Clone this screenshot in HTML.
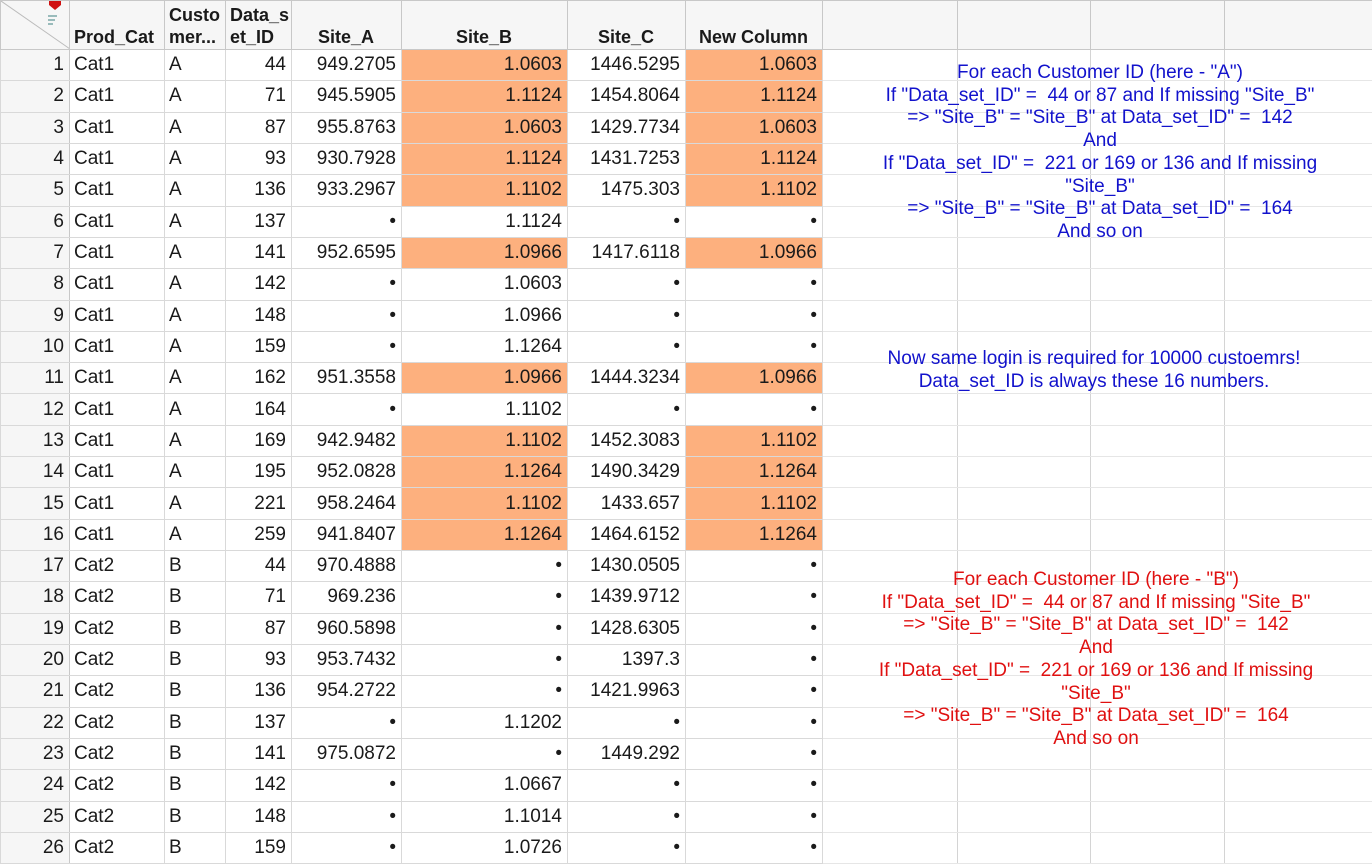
<!DOCTYPE html>
<html><head><meta charset="utf-8"><style>
body{margin:0;width:1372px;height:848px;overflow:hidden;background:#fff;font-family:"Liberation Sans",Arial,sans-serif;position:relative}
table{position:absolute;left:0;top:0;width:1372px;border-collapse:collapse;table-layout:fixed;font-size:19px;color:#1a1a1a}
td,th{border:1px solid #d9d9d9;padding:0 5px 0 4px;white-space:nowrap;overflow:hidden;height:30.32px;line-height:30px}
th{height:47px;background:#f6f6f6;border-color:#c8c8c8;font-weight:bold;font-size:18px;vertical-align:bottom;line-height:22px;padding-bottom:1px;text-align:center}
td.n{background:#f6f6f6;text-align:right;padding-right:5px;border-right-color:#c8c8c8}
td.r{text-align:right}
td.o{background:#fdb07e}
td.e{border-left-color:#d4d4d4;border-right-color:#d4d4d4;border-top-color:#e6e6e6;border-bottom-color:#e6e6e6}
.t{position:absolute;text-align:center;font-size:19px;line-height:22.7px;white-space:nowrap}
</style></head><body>
<table>
<colgroup><col style="width:69px"><col style="width:95px"><col style="width:61px"><col style="width:66px"><col style="width:110px"><col style="width:166px"><col style="width:118px"><col style="width:137px"><col style="width:135px"><col style="width:133px"><col style="width:134px"><col style="width:148px"></colgroup>
<tr><th style="background:#f6f6f6;position:relative"><svg width="69" height="48" style="position:absolute;left:0;top:0"><line x1="0" y1="0" x2="69" y2="48" stroke="#bbb"/><path d="M48 0 L60 0 L60 4 L54 9 L48 4Z" fill="#d01010"/><rect x="47" y="14" width="9" height="2" fill="#9bb"/><rect x="47" y="18" width="7" height="2" fill="#9bb"/><rect x="47" y="22" width="5" height="2" fill="#9bb"/></svg></th><th style="text-align:left">Prod_Cat</th><th style="text-align:left">Custo<br>mer...</th><th style="text-align:left">Data_s<br>et_ID</th><th>Site_A</th><th>Site_B</th><th>Site_C</th><th>New Column</th><th></th><th></th><th></th><th></th></tr>
<tr><td class="n">1</td><td>Cat1</td><td>A</td><td class="r">44</td><td class="r">949.2705</td><td class="r o">1.0603</td><td class="r">1446.5295</td><td class="r o">1.0603</td><td class="e"></td><td class="e"></td><td class="e"></td><td class="e"></td></tr>
<tr><td class="n">2</td><td>Cat1</td><td>A</td><td class="r">71</td><td class="r">945.5905</td><td class="r o">1.1124</td><td class="r">1454.8064</td><td class="r o">1.1124</td><td class="e"></td><td class="e"></td><td class="e"></td><td class="e"></td></tr>
<tr><td class="n">3</td><td>Cat1</td><td>A</td><td class="r">87</td><td class="r">955.8763</td><td class="r o">1.0603</td><td class="r">1429.7734</td><td class="r o">1.0603</td><td class="e"></td><td class="e"></td><td class="e"></td><td class="e"></td></tr>
<tr><td class="n">4</td><td>Cat1</td><td>A</td><td class="r">93</td><td class="r">930.7928</td><td class="r o">1.1124</td><td class="r">1431.7253</td><td class="r o">1.1124</td><td class="e"></td><td class="e"></td><td class="e"></td><td class="e"></td></tr>
<tr><td class="n">5</td><td>Cat1</td><td>A</td><td class="r">136</td><td class="r">933.2967</td><td class="r o">1.1102</td><td class="r">1475.303</td><td class="r o">1.1102</td><td class="e"></td><td class="e"></td><td class="e"></td><td class="e"></td></tr>
<tr><td class="n">6</td><td>Cat1</td><td>A</td><td class="r">137</td><td class="r">•</td><td class="r">1.1124</td><td class="r">•</td><td class="r">•</td><td class="e"></td><td class="e"></td><td class="e"></td><td class="e"></td></tr>
<tr><td class="n">7</td><td>Cat1</td><td>A</td><td class="r">141</td><td class="r">952.6595</td><td class="r o">1.0966</td><td class="r">1417.6118</td><td class="r o">1.0966</td><td class="e"></td><td class="e"></td><td class="e"></td><td class="e"></td></tr>
<tr><td class="n">8</td><td>Cat1</td><td>A</td><td class="r">142</td><td class="r">•</td><td class="r">1.0603</td><td class="r">•</td><td class="r">•</td><td class="e"></td><td class="e"></td><td class="e"></td><td class="e"></td></tr>
<tr><td class="n">9</td><td>Cat1</td><td>A</td><td class="r">148</td><td class="r">•</td><td class="r">1.0966</td><td class="r">•</td><td class="r">•</td><td class="e"></td><td class="e"></td><td class="e"></td><td class="e"></td></tr>
<tr><td class="n">10</td><td>Cat1</td><td>A</td><td class="r">159</td><td class="r">•</td><td class="r">1.1264</td><td class="r">•</td><td class="r">•</td><td class="e"></td><td class="e"></td><td class="e"></td><td class="e"></td></tr>
<tr><td class="n">11</td><td>Cat1</td><td>A</td><td class="r">162</td><td class="r">951.3558</td><td class="r o">1.0966</td><td class="r">1444.3234</td><td class="r o">1.0966</td><td class="e"></td><td class="e"></td><td class="e"></td><td class="e"></td></tr>
<tr><td class="n">12</td><td>Cat1</td><td>A</td><td class="r">164</td><td class="r">•</td><td class="r">1.1102</td><td class="r">•</td><td class="r">•</td><td class="e"></td><td class="e"></td><td class="e"></td><td class="e"></td></tr>
<tr><td class="n">13</td><td>Cat1</td><td>A</td><td class="r">169</td><td class="r">942.9482</td><td class="r o">1.1102</td><td class="r">1452.3083</td><td class="r o">1.1102</td><td class="e"></td><td class="e"></td><td class="e"></td><td class="e"></td></tr>
<tr><td class="n">14</td><td>Cat1</td><td>A</td><td class="r">195</td><td class="r">952.0828</td><td class="r o">1.1264</td><td class="r">1490.3429</td><td class="r o">1.1264</td><td class="e"></td><td class="e"></td><td class="e"></td><td class="e"></td></tr>
<tr><td class="n">15</td><td>Cat1</td><td>A</td><td class="r">221</td><td class="r">958.2464</td><td class="r o">1.1102</td><td class="r">1433.657</td><td class="r o">1.1102</td><td class="e"></td><td class="e"></td><td class="e"></td><td class="e"></td></tr>
<tr><td class="n">16</td><td>Cat1</td><td>A</td><td class="r">259</td><td class="r">941.8407</td><td class="r o">1.1264</td><td class="r">1464.6152</td><td class="r o">1.1264</td><td class="e"></td><td class="e"></td><td class="e"></td><td class="e"></td></tr>
<tr><td class="n">17</td><td>Cat2</td><td>B</td><td class="r">44</td><td class="r">970.4888</td><td class="r">•</td><td class="r">1430.0505</td><td class="r">•</td><td class="e"></td><td class="e"></td><td class="e"></td><td class="e"></td></tr>
<tr><td class="n">18</td><td>Cat2</td><td>B</td><td class="r">71</td><td class="r">969.236</td><td class="r">•</td><td class="r">1439.9712</td><td class="r">•</td><td class="e"></td><td class="e"></td><td class="e"></td><td class="e"></td></tr>
<tr><td class="n">19</td><td>Cat2</td><td>B</td><td class="r">87</td><td class="r">960.5898</td><td class="r">•</td><td class="r">1428.6305</td><td class="r">•</td><td class="e"></td><td class="e"></td><td class="e"></td><td class="e"></td></tr>
<tr><td class="n">20</td><td>Cat2</td><td>B</td><td class="r">93</td><td class="r">953.7432</td><td class="r">•</td><td class="r">1397.3</td><td class="r">•</td><td class="e"></td><td class="e"></td><td class="e"></td><td class="e"></td></tr>
<tr><td class="n">21</td><td>Cat2</td><td>B</td><td class="r">136</td><td class="r">954.2722</td><td class="r">•</td><td class="r">1421.9963</td><td class="r">•</td><td class="e"></td><td class="e"></td><td class="e"></td><td class="e"></td></tr>
<tr><td class="n">22</td><td>Cat2</td><td>B</td><td class="r">137</td><td class="r">•</td><td class="r">1.1202</td><td class="r">•</td><td class="r">•</td><td class="e"></td><td class="e"></td><td class="e"></td><td class="e"></td></tr>
<tr><td class="n">23</td><td>Cat2</td><td>B</td><td class="r">141</td><td class="r">975.0872</td><td class="r">•</td><td class="r">1449.292</td><td class="r">•</td><td class="e"></td><td class="e"></td><td class="e"></td><td class="e"></td></tr>
<tr><td class="n">24</td><td>Cat2</td><td>B</td><td class="r">142</td><td class="r">•</td><td class="r">1.0667</td><td class="r">•</td><td class="r">•</td><td class="e"></td><td class="e"></td><td class="e"></td><td class="e"></td></tr>
<tr><td class="n">25</td><td>Cat2</td><td>B</td><td class="r">148</td><td class="r">•</td><td class="r">1.1014</td><td class="r">•</td><td class="r">•</td><td class="e"></td><td class="e"></td><td class="e"></td><td class="e"></td></tr>
<tr><td class="n">26</td><td>Cat2</td><td>B</td><td class="r">159</td><td class="r">•</td><td class="r">1.0726</td><td class="r">•</td><td class="r">•</td><td class="e"></td><td class="e"></td><td class="e"></td><td class="e"></td></tr>
</table>
<div class="t" style="left:830px;width:540px;top:62px;color:#1212cc">For each Customer ID (here - "A")<br>If "Data_set_ID" =&nbsp; 44 or 87 and If missing "Site_B"<br>=&gt; "Site_B" = "Site_B" at Data_set_ID" =&nbsp; 142<br>And<br>If "Data_set_ID" =&nbsp; 221 or 169 or 136 and If missing<br>"Site_B"<br>=&gt; "Site_B" = "Site_B" at Data_set_ID" =&nbsp; 164<br>And so on</div>
<div class="t" style="left:824px;width:540px;top:348px;color:#1212cc">Now same login is required for 10000 custoemrs!<br>Data_set_ID is always these 16 numbers.</div>
<div class="t" style="left:826px;width:540px;top:569px;color:#e01010">For each Customer ID (here - "B")<br>If "Data_set_ID" =&nbsp; 44 or 87 and If missing "Site_B"<br>=&gt; "Site_B" = "Site_B" at Data_set_ID" =&nbsp; 142<br>And<br>If "Data_set_ID" =&nbsp; 221 or 169 or 136 and If missing<br>"Site_B"<br>=&gt; "Site_B" = "Site_B" at Data_set_ID" =&nbsp; 164<br>And so on</div>
</body></html>
